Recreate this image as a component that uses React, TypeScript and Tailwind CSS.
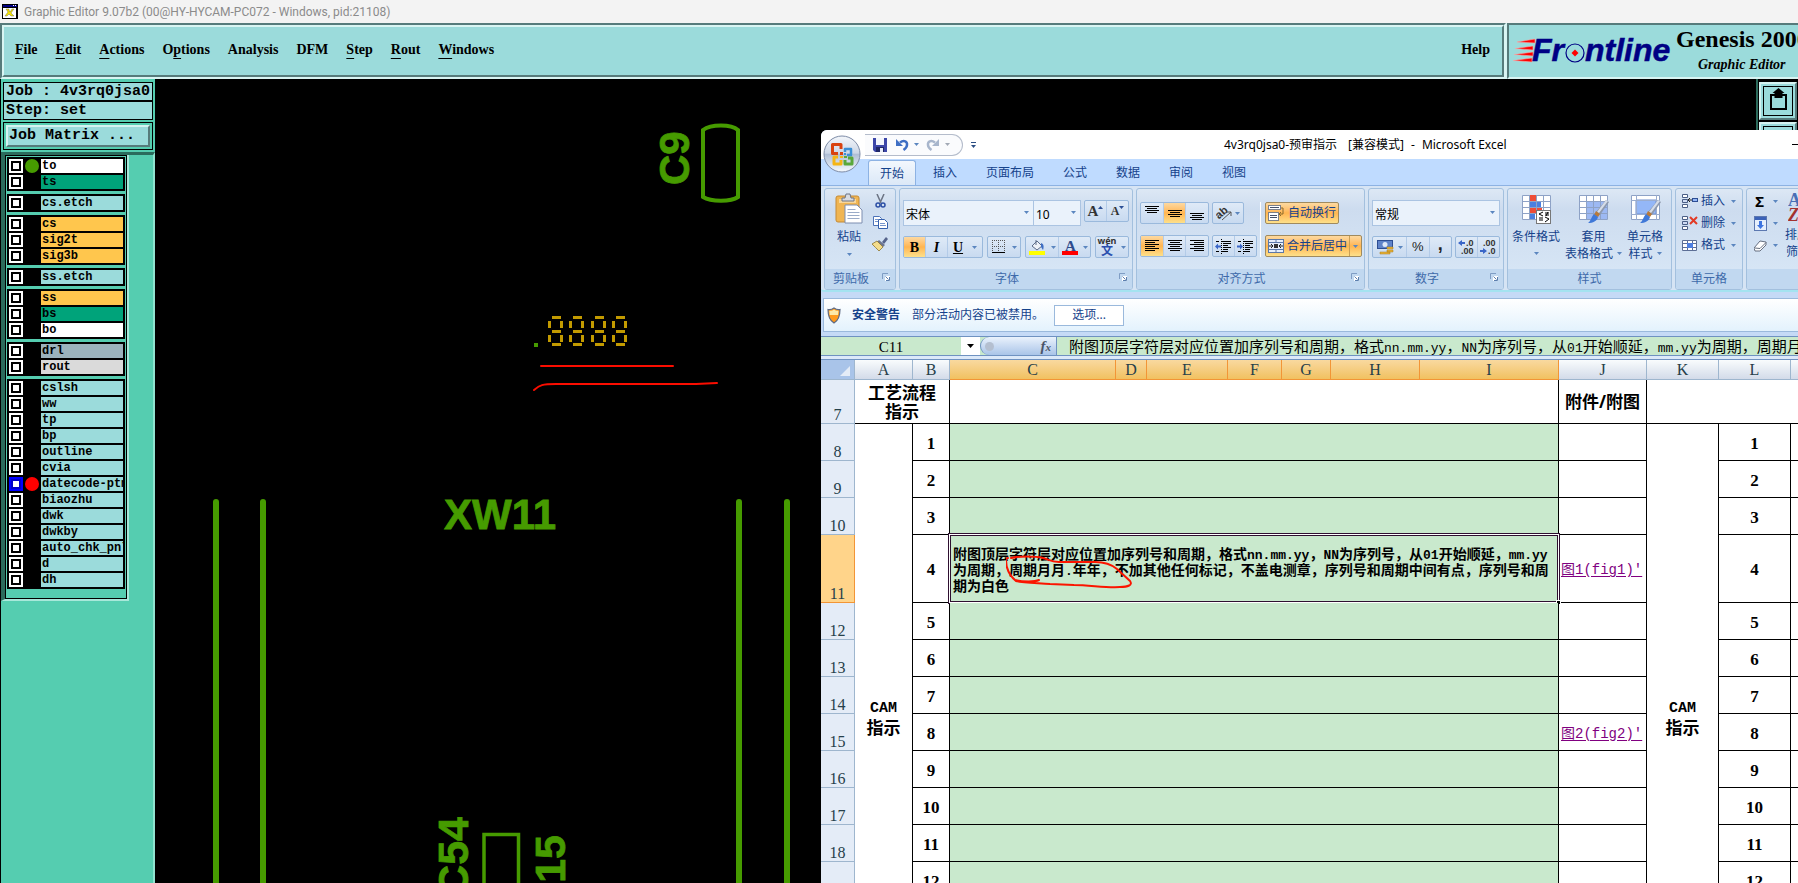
import type { ReactNode } from "react";

const CJK = "font-['Noto_Sans','Noto_Sans_CJK_SC',sans-serif]";

/* ---------- small helpers ---------- */

function Caret({ className = "text-[#5b86bf]" }: { className?: string }) {
  return (
    <svg width="5" height="3" viewBox="0 0 5 3" className={`shrink-0 ${className}`} aria-hidden="true">
      <path d="M0 0h5L2.5 3z" fill="currentColor" />
    </svg>
  );
}

/* Half-width Latin runs next to full-width Chinese characters */
function Mixed({ text, latin }: { text: string; latin: string }) {
  return (
    <>
      {text.split(/([\x21-\x7e]+)/).map((part, i) =>
        i % 2 ? (
          <span key={i} className={latin}>
            {part}
          </span>
        ) : (
          part
        ),
      )}
    </>
  );
}

/* ---------- Genesis editor ---------- */

const menus: { label: string; key: number }[] = [
  { label: "File", key: 0 },
  { label: "Edit", key: 0 },
  { label: "Actions", key: 0 },
  { label: "Options", key: 1 },
  { label: "Analysis", key: -1 },
  { label: "DFM", key: -1 },
  { label: "Step", key: 0 },
  { label: "Rout", key: 0 },
  { label: "Windows", key: 0 },
];

function TitleBar() {
  return (
    <div className="flex h-[23px] shrink-0 items-center gap-[6px] bg-[#f3f3f3] pl-[2px]">
      <svg width="16" height="15" viewBox="0 0 16 15" aria-hidden="true">
        <rect width="16" height="15" fill="#000" />
        <rect x="1" y="1" width="14" height="2" fill="#000080" />
        <rect x="11" y="1" width="1" height="1" fill="#fff" />
        <rect x="13" y="1" width="1" height="1" fill="#fff" />
        <rect x="1" y="4" width="13" height="10" fill="#fff" />
        <path d="M4 5h3v1l1 2 2-3h2l-3 4 3 3h-3l-2-2-2 2H3l3-4z" fill="#f5e400" stroke="#555" strokeWidth=".4" />
      </svg>
      <span className="font-['Roboto',sans-serif] text-[12px] leading-4 text-[#8b8b8b]">
        Graphic Editor 9.07b2 (00@HY-HYCAM-PC072 - Windows, pid:21108)
      </span>
    </div>
  );
}

function GenesisHeader() {
  return (
    <header className="flex h-[56px] shrink-0 gap-[1px] bg-[#d5f3f1] font-['Liberation_Serif',serif] text-black">
      <div className="flex-1 border-2 border-t-[#567b7b] border-r-[#d9f5f3] border-b-[#d9f5f3] border-l-[#567b7b]">
        <nav className="flex h-full items-center gap-[18px] border-2 border-t-[#d9f5f3] border-r-[#567b7b] border-b-[#567b7b] border-l-[#d9f5f3] bg-[#9bdbdb] pr-[12px] pb-[2px] pl-[11px] text-[14px] font-bold">
          {menus.map(({ label, key }) => (
            <button key={label} type="button" className="leading-5">
              {key < 0 ? (
                label
              ) : (
                <>
                  {label.slice(0, key)}
                  <span className="underline underline-offset-4">{label[key]}</span>
                  {label.slice(key + 1)}
                </>
              )}
            </button>
          ))}
          <button type="button" className="ml-auto leading-5">
            Help
          </button>
        </nav>
      </div>
      <div className="flex w-[291px] shrink-0 overflow-hidden border-2 border-t-[#567b7b] border-r-0 border-b-[#d9f5f3] border-l-[#567b7b] bg-[#9bdbdb] pl-[3px]">
        <svg width="162" height="52" viewBox="1512 25 162 52" className="shrink-0" role="img" aria-label="Frontline">
          <g fill="#f00" stroke="#f6a9a9" strokeWidth=".6">
            <path d="M1517 42l18-3v4z" />
            <path d="M1515 48.500l18-2.500v4z" />
            <path d="M1514 54.500l19-2.500v4z" />
            <path d="M1513 60.500l19-2.500v4z" />
          </g>
          <g
            fill="#000084"
            stroke="#000084"
            strokeWidth=".5"
            fontFamily="'Liberation Sans', sans-serif"
            fontWeight="bold"
            fontStyle="italic"
            fontSize="32"
          >
            <text x="1532" y="61">
              Fr
            </text>
            <text x="1585" y="61">
              ntline
            </text>
          </g>
          <circle cx="1575" cy="53" r="9" fill="#9bdbdb" stroke="#000084" strokeWidth="1.200" />
          <path d="M1575 49.500l3.500 3.500-3.500 3.500-3.500-3.500z" fill="#f00" />
        </svg>
        <div className="flex flex-col whitespace-nowrap">
          <h1 className="pl-[2px] text-[24px] leading-[29px] font-bold">Genesis 2000</h1>
          <p className="pl-[24px] text-[14px] leading-[22px] font-bold italic">Graphic Editor</p>
        </div>
      </div>
    </header>
  );
}

type Layer = { name: string; tone: string; dot?: string; active?: boolean };
const teal = "bg-[#9bdbdb]";
const amber = "bg-[#ffc64d]";
const green = "bg-[#00a37a]";
const layerGroups: Layer[][] = [
  [
    { name: "to", tone: "bg-white", dot: "bg-[#469b00]" },
    { name: "ts", tone: green },
  ],
  [{ name: "cs.etch", tone: teal }],
  [
    { name: "cs", tone: amber },
    { name: "sig2t", tone: amber },
    { name: "sig3b", tone: amber },
  ],
  [{ name: "ss.etch", tone: teal }],
  [
    { name: "ss", tone: amber },
    { name: "bs", tone: green },
    { name: "bo", tone: "bg-white" },
  ],
  [
    { name: "drl", tone: "bg-[#9bb3bd]" },
    { name: "rout", tone: "bg-[#dadada]" },
  ],
  [
    { name: "cslsh", tone: teal },
    { name: "ww", tone: teal },
    { name: "tp", tone: teal },
    { name: "bp", tone: teal },
    { name: "outline", tone: teal },
    { name: "cvia", tone: teal },
    { name: "datecode-ptm", tone: teal, dot: "bg-[#ff0000]", active: true },
    { name: "biaozhu", tone: teal },
    { name: "dwk", tone: teal },
    { name: "dwkby", tone: teal },
    { name: "auto_chk_pnl", tone: teal },
    { name: "d", tone: teal },
    { name: "dh", tone: teal },
  ],
];

function LayerPanel() {
  return (
    <aside className="flex w-[155px] shrink-0 flex-col border-l border-black bg-[#55cdb0] pt-[3px] font-['Liberation_Mono',monospace] font-bold text-black">
      <div className="mx-[2px] flex flex-col text-[15px] leading-[17px]">
        <p className="border border-black bg-[#9bdbdb] pl-[2px]">Job : 4v3rq0jsa0</p>
        <p className="border border-black bg-[#9bdbdb] pl-[2px] whitespace-pre">Step: set</p>
        <div className="mt-[2px] border border-black p-[2px]">
          <button
            type="button"
            className="block w-full border-2 border-t-[#d5f3f1] border-r-[#567b7b] border-b-[#567b7b] border-l-[#d5f3f1] bg-[#9bdbdb] pl-[1px] text-left leading-[18px]"
          >
            Job Matrix ...
          </button>
        </div>
      </div>
      <div className="mt-[2px] flex-1 border-t-[3px] border-r-2 border-t-[#2b6b5c] border-r-[#8fe3cf]">
        <div className="w-[128px] border-r-2 border-b-2 border-l-4 border-r-[#a8e8da] border-b-[#a8e8da] border-l-[#2b6b5c]">
          <div className="flex flex-col gap-[3px] border border-black px-[1px] pt-[1px] pb-[9px]">
            {layerGroups.map((group, g) => (
              <ul key={g} className="flex flex-col gap-[2px] bg-black p-[2px]">
                {group.map((l) => (
                  <li key={l.name} className="flex h-[14px] gap-[2px]">
                    <button
                      type="button"
                      aria-label={`Select ${l.name}`}
                      className={`flex size-[14px] shrink-0 items-center justify-center ${l.active ? "bg-[#0000ff]" : "bg-white"}`}
                    >
                      <span
                        className={`size-[10px] border-2 bg-white ${l.active ? "border-[#0000c8]" : "border-black"}`}
                      />
                    </button>
                    <span className={`size-[14px] shrink-0 rounded-full ${l.dot ?? "bg-black"}`} />
                    <span
                      className={`flex-1 overflow-hidden pl-[1px] text-[12px] leading-[14px] whitespace-nowrap ${l.tone}`}
                    >
                      {l.name}
                    </span>
                  </li>
                ))}
              </ul>
            ))}
          </div>
        </div>
      </div>
    </aside>
  );
}

function Segments({ x }: { x: number }) {
  return (
    <path
      d={`M${x + 4} 317.500h9M${x + 4} 331.500h9M${x + 4} 344.500h9M${x + 1.5} 321v7M${x + 13.5} 321v7M${x + 1.5} 335v7M${x + 13.5} 335v7`}
      stroke="#c29a00"
      strokeWidth="3"
    />
  );
}

function BoardCanvas() {
  return (
    <svg width="1600" height="804" viewBox="155 79 1600 804" className="block" role="img" aria-label="Board view">
      <g fill="none" stroke="#469b00" strokeWidth="4">
        <path d="M703 130c8-6 28-6 35 0v67c-7 5-27 5-35 0z" />
        <path d="M484 890V834.500h34.500V890" strokeWidth="3.500" />
      </g>
      <g stroke="#469b00" strokeWidth="6" strokeLinecap="round">
        <path d="M216 502v400M263 502v400M739 502v400M787 502v400" />
      </g>
      <g
        fill="#469b00"
        stroke="#469b00"
        strokeWidth=".8"
        fontFamily="'Liberation Sans', sans-serif"
        fontWeight="bold"
        fontSize="43"
      >
        <text x="444" y="529" fontSize="42">
          XW11
        </text>
        <text transform="translate(689 185) rotate(-90)" fontSize="42">
          C9
        </text>
        <text transform="translate(468 817) rotate(-90)" textAnchor="end">
          C54
        </text>
        <text transform="translate(565 835) rotate(-90)" textAnchor="end">
          C15
        </text>
      </g>
      <rect x="534" y="343" width="4" height="4" fill="#469b00" />
      <Segments x={548} />
      <Segments x={569} />
      <Segments x={591} />
      <Segments x={612} />
      <g fill="none" stroke="#fb0d00" strokeWidth="2" strokeLinecap="round">
        <path d="M541 366h132" />
        <path d="M534 390c6-5 8-6 22-6h140l21-1" />
      </g>
    </svg>
  );
}

function ToolColumn() {
  return (
    <div className="flex w-[42px] shrink-0 flex-col gap-[2px] border-l-2 border-[#2b6b5c] bg-black pt-[3px] pl-[1px]">
      {[0, 1].map((i) => (
        <button
          key={i}
          type="button"
          aria-label={i ? "Zoom" : "Export"}
          className="flex size-[38px] items-center justify-center border-2 border-t-[#d5f3f1] border-r-[#567b7b] border-b-[#567b7b] border-l-[#d5f3f1] bg-[#9bdbdb]"
        >
          <svg width="30" height="30" viewBox="0 0 30 30" aria-hidden="true">
            <rect x=".5" y=".5" width="29" height="29" fill="none" stroke="#000" />
            {i === 0 && (
              <>
                <path d="M12 9H8v14h15V9h-4" fill="none" stroke="#000" strokeWidth="2" />
                <path d="M15.500 2l6 5h-2v5h-8V7h-2z" />
              </>
            )}
          </svg>
        </button>
      ))}
    </div>
  );
}

/* ---------- Excel window ---------- */

function OfficeOrb() {
  return (
    <svg width="38" height="38" viewBox="0 0 38 38" aria-hidden="true">
      <defs>
        <linearGradient id="orb" x1="0" y1="0" x2="0" y2="1">
          <stop offset="0" stopColor="#f4f7fb" />
          <stop offset=".48" stopColor="#ccd6e6" />
          <stop offset=".5" stopColor="#aebdd4" />
          <stop offset="1" stopColor="#f6fafe" />
        </linearGradient>
      </defs>
      <circle cx="19" cy="19" r="18" fill="url(#orb)" stroke="#7d8ba6" />
      <g fill="none" strokeWidth="3" strokeLinejoin="round">
        <path d="M18 14V9.500H9.500v9H15" stroke="#d9420f" />
        <path d="M22 17v-3h6v6h-4" stroke="#3b8fd6" strokeWidth="2.500" />
        <path d="M18 25v4h-7v-7h4" stroke="#f5b515" />
        <path d="M22 25v4h7v-6h-4" stroke="#5aa83a" />
      </g>
      <g>
        <rect x="17" y="17" width="3" height="3" fill="#d9420f" />
        <rect x="21" y="18" width="2" height="2" fill="#3b8fd6" />
        <rect x="17" y="21" width="3" height="2" fill="#f5b515" />
        <rect x="21" y="21" width="3" height="2" fill="#5aa83a" />
      </g>
    </svg>
  );
}

function SaveIcon() {
  return (
    <svg width="14" height="14" viewBox="0 0 14 14" aria-hidden="true">
      <path d="M0 0h14v14H2l-2-2z" fill="#3c46a8" />
      <rect x="3" y="0" width="8" height="7" fill="#f2f5fc" />
      <rect x="3" y="9" width="8" height="5" fill="#1f2766" />
      <rect x="7" y="10" width="3" height="4" fill="#e8ecf8" />
    </svg>
  );
}

function UndoIcon({ tone, flip }: { tone: string; flip?: boolean }) {
  return (
    <svg width="13" height="13" viewBox="0 0 13 13" aria-hidden="true">
      <g transform={flip ? "translate(13 0) scale(-1 1)" : undefined}>
        <path d="M4 4.500c4-3 7.500-1 7 2.500 0 2-1.500 3.500-3.500 5" fill="none" stroke={tone} strokeWidth="2.500" />
        <path d="M0 1v7h7z" fill={tone} />
      </g>
    </svg>
  );
}

const tabs = ["开始", "插入", "页面布局", "公式", "数据", "审阅", "视图"];

function ExcelTitle() {
  return (
    <div className="relative flex h-[29px] shrink-0 items-center bg-white">
      <div className="ml-[44px] flex h-[22px] w-[98px] items-center rounded-r-full border border-l-0 border-[#b4bccb] bg-[#fafbfd] pl-[8px]">
        <button type="button" aria-label="保存">
          <SaveIcon />
        </button>
        <button type="button" aria-label="撤销" className="ml-[9px] flex items-center gap-[5px]">
          <UndoIcon tone="#3f6fc4" />
          <Caret />
        </button>
        <button type="button" aria-label="恢复" className="ml-[7px] flex items-center gap-[6px]">
          <UndoIcon tone="#a8b6cc" flip />
          <Caret className="text-[#a2a9b5]" />
        </button>
      </div>
      <button type="button" aria-label="自定义快速访问工具栏" className="ml-[8px] flex flex-col gap-[2px]">
        <span className="h-px w-[5px] bg-[#2a4d83]" />
        <Caret className="text-[#2a4d83]" />
      </button>
      <h2 className={`ml-[248px] flex gap-[7px] text-[12px] leading-4 whitespace-nowrap text-black ${CJK}`}>
        <span>4v3rq0jsa0-预审指示</span>
        <span className="pl-[4px]">[兼容模式]</span>
        <span>-</span>
        <span>Microsoft Excel</span>
      </h2>
      <span className="absolute top-[14px] right-0 h-px w-[6px] bg-black" />
    </div>
  );
}

function ExcelTabs() {
  return (
    <div role="tablist" className="flex h-[27px] shrink-0 items-end gap-[5px] border-b border-[#8db2e3] bg-[#bfdbff] pl-[47px]">
      {tabs.map((t, i) => (
        <button
          key={t}
          role="tab"
          type="button"
          aria-selected={i === 0}
          className={`h-[25px] rounded-t-[3px] px-[11px] text-[12px] leading-[23px] text-[#15428b] ${
            i === 0
              ? "border border-b-0 border-[#8db2e3] bg-linear-to-b from-[#f2f7fd] to-[#dbe8f7]"
              : "border border-transparent"
          }`}
        >
          {t}
        </button>
      ))}
    </div>
  );
}

function Group({
  title,
  className,
  launcher,
  children,
}: {
  title: string;
  className: string;
  launcher?: boolean;
  children: ReactNode;
}) {
  return (
    <section
      className={`flex h-[102px] shrink-0 flex-col overflow-hidden rounded-[3px] border border-[#a3c0de] bg-linear-to-b from-[#dde8f5] from-0% via-[#cddcef] via-20% to-[#d9e8f7] ${className}`}
    >
      <div className="min-h-0 flex-1">{children}</div>
      <div
        className={`relative h-[20px] bg-[#c1d8f0] text-center text-[12px] leading-[19px] whitespace-nowrap text-[#3e6aaa] ${
          launcher ? "pr-[18px]" : ""
        }`}
      >
        {title}
        {launcher && (
          <button type="button" aria-label={`${title}设置`} className="absolute top-[4px] right-[5px]">
            <svg width="8" height="8" viewBox="0 0 8 8" aria-hidden="true">
              <path d="M.5 6V.5H6" fill="none" stroke="#7f9dc4" />
              <path d="M3 3h5v5H3z" fill="#fff" />
              <path d="M3.500 3.500l3 3M7.500 4v3.500H4" fill="none" stroke="#5d7fae" />
            </svg>
          </button>
        )}
      </div>
    </section>
  );
}

function Cluster({ className = "", children }: { className?: string; children: ReactNode }) {
  return (
    <div
      className={`flex h-[22px] shrink-0 divide-x divide-[#b3cbe8] overflow-hidden rounded-[2px] border border-[#9ab9dc] bg-linear-to-b from-[#dfeaf7] to-[#c8daf0] ${className}`}
    >
      {children}
    </div>
  );
}

const hot = "bg-linear-to-b from-[#fdd9a0] via-[#ffb550] to-[#fde08a]";

function Tool({ label, on, className = "flex-1", children }: { label: string; on?: boolean; className?: string; children: ReactNode }) {
  return (
    <button type="button" aria-label={label} className={`flex items-center justify-center ${on ? hot : ""} ${className}`}>
      {children}
    </button>
  );
}

function Lines({ kind, y }: { kind: "left" | "center" | "right"; y: number[] }) {
  return (
    <svg width="16" height="16" viewBox="0 0 16 16" aria-hidden="true">
      {y.map((v, i) => {
        const w = i % 2 ? 10 : 14;
        const x = kind === "left" ? 1 : kind === "right" ? 15 - w : 8 - w / 2;
        return <rect key={v} x={x} y={v} width={w} height="1" fill="#000" />;
      })}
    </svg>
  );
}

function IndentIcon({ out }: { out?: boolean }) {
  return (
    <svg width="17" height="15" viewBox="0 0 17 15" aria-hidden="true">
      <path
        d="M1 2.500h3M6 2.500h10M8 4.500h8M8 6.500h5M8 8.500h8M8 10.500h5M1 12.500h3M6 12.500h7"
        stroke="#000"
        fill="none"
      />
      <path d="M6.500 0v15" stroke="#000" strokeDasharray="1 1" />
      <path d={out ? "M0 7.500l3-3v2h3v2H3v2z" : "M6 7.500l-3-3v2H0v2h3v2z"} fill="#3a66c8" />
    </svg>
  );
}

function ClipboardGroup() {
  return (
    <Group title="剪贴板" className="w-[72px]" launcher>
      <div className="flex pt-[4px] pl-[10px]">
        <button type="button" className="flex flex-col items-center text-[12px] text-[#15428b]">
          <svg width="28" height="31" viewBox="0 0 28 31" aria-hidden="true">
            <rect x="1" y="3" width="23" height="26" rx="2" fill="#f0b552" stroke="#c58a35" />
            <rect x="4" y="6" width="17" height="4" fill="#f8d79a" />
            <path d="M7 5h3l1-4h4l1 4h3v3H7z" fill="#d8dbe2" stroke="#6c7486" />
            <path d="M10 12h12l5 5v13H10z" fill="#fff" stroke="#7d8db0" />
            <path d="M12.500 16.500h8M12.500 19.500h12M12.500 22.500h12M12.500 25.500h12" stroke="#9aabc8" />
          </svg>
          <span className="mt-[5px] leading-4">粘贴</span>
          <Caret className="mt-[8px] text-[#5b86bf]" />
        </button>
        <div className="ml-[9px] flex flex-col items-center gap-[8px] pt-[1px]">
          <button type="button" aria-label="剪切">
            <svg width="11" height="14" viewBox="0 0 11 14" aria-hidden="true">
              <path d="M2 0l4 9M9 0L5 9" stroke="#6c7484" strokeWidth="1.500" />
              <circle cx="3" cy="11" r="2" fill="none" stroke="#2c4fa5" strokeWidth="1.500" />
              <circle cx="8" cy="11" r="2" fill="none" stroke="#2c4fa5" strokeWidth="1.500" />
            </svg>
          </button>
          <button type="button" aria-label="复制">
            <svg width="15" height="13" viewBox="0 0 15 13" aria-hidden="true">
              <path d="M.5.500h6l2 2v7h-8z" fill="#fff" stroke="#4c72b8" />
              <path d="M5.500 3.500h6l3 3v6h-9z" fill="#fff" stroke="#3560ad" />
              <path d="M2 3.500h3M2 5.500h3M7 7.500h5M7 9.500h6" stroke="#7695cc" />
            </svg>
          </button>
          <button type="button" aria-label="格式刷">
            <svg width="16" height="14" viewBox="0 0 16 14" aria-hidden="true">
              <path d="M10 5l4-5 2 2-4 5z" fill="#56648c" />
              <path d="M7 3l6 5-2 2-6-5z" fill="#6d7690" />
              <path d="M5 4l6 6-4 4C5 12 2 9 0 7z" fill="#f3dc8c" stroke="#8c7430" strokeWidth=".8" />
            </svg>
          </button>
        </div>
      </div>
    </Group>
  );
}

function Combo({ label, value, className }: { label: string; value: string; className: string }) {
  return (
    <div className={`relative h-[26px] border border-[#abc4e2] bg-[#eaf2fb] ${className}`}>
      <select
        aria-label={label}
        defaultValue={value}
        className="h-[22px] w-full appearance-none bg-transparent pl-[2px] text-[12px] text-black outline-none"
      >
        <option>{value}</option>
      </select>
      <span className="pointer-events-none absolute top-[10px] right-[4px] flex">
        <Caret />
      </span>
    </div>
  );
}

function FontGroup() {
  return (
    <Group title="字体" className="w-[234px]" launcher>
      <div className="flex flex-col gap-[10px] px-[3px] pt-[11px] font-['Liberation_Serif',serif] font-bold text-[#333]">
        <div className="flex items-start gap-[3px]">
          <div className={`flex font-normal ${CJK}`}>
            <Combo label="字体" value="宋体" className="w-[131px]" />
            <Combo label="字号" value="10" className="-ml-px w-[48px]" />
          </div>
          <Cluster className="w-[45px]">
            <Tool label="增大字号">
              <span className="text-[15px] leading-none">A</span>
              <svg width="5" height="12" viewBox="0 0 5 12" aria-hidden="true">
                <path d="M0 4h5L2.500 1z" fill="#2c4f96" />
              </svg>
            </Tool>
            <Tool label="减小字号">
              <span className="text-[12px] leading-none">A</span>
              <svg width="5" height="12" viewBox="0 0 5 12" aria-hidden="true">
                <path d="M0 1h5L2.500 4z" fill="#2c4f96" />
              </svg>
            </Tool>
          </Cluster>
        </div>
        <div className="flex gap-[4px]">
          <Cluster className="w-[80px] text-[14px] text-black">
            <Tool label="加粗" on className="w-[22px]">
              B
            </Tool>
            <Tool label="倾斜" className="w-[22px]">
              <i>I</i>
            </Tool>
            <Tool label="下划线" className="flex-1 gap-[9px]">
              <span className="underline">U</span>
              <Caret />
            </Tool>
          </Cluster>
          <Cluster className="w-[34px]">
            <Tool label="边框" className="flex-1 gap-[6px]">
              <svg width="14" height="14" viewBox="0 0 14 14" aria-hidden="true">
                <path d="M.5 0v12M6.500 0v12M12.500 0v12M0 .5h13M0 6.500h13" stroke="#555" strokeDasharray="1 1" />
                <rect y="12" width="13" height="1" fill="#000" />
              </svg>
              <Caret />
            </Tool>
          </Cluster>
          <Cluster className="w-[66px]">
            <Tool label="填充颜色" className="w-[33px] gap-[5px]">
              <svg width="17" height="17" viewBox="0 0 17 17" aria-hidden="true">
                <path d="M3 7l5-5 5 5-5 4z" fill="#eef2f8" stroke="#5d6c88" />
                <path d="M7 1v5" stroke="#5d6c88" />
                <path d="M12 4c3 1 3 4 2 7l-2-3z" fill="#3f6fc4" />
                <rect y="12" width="16" height="4" fill="#ff0" />
              </svg>
              <Caret />
            </Tool>
            <Tool label="字体颜色" className="flex-1 gap-[5px]">
              <svg width="16" height="17" viewBox="0 0 16 17" aria-hidden="true">
                <text x="3" y="12" fontSize="15" fill="#2d4b8c" fontFamily="'Liberation Serif', serif" fontWeight="bold">
                  A
                </text>
                <rect y="12" width="16" height="4" fill="#f00" />
              </svg>
              <Caret />
            </Tool>
          </Cluster>
          <Cluster className="w-[34px]">
            <Tool label="显示拼音" className={`flex-1 gap-[5px] ${CJK}`}>
              <span className="flex flex-col items-center">
                <span className="text-[9px] leading-[8px]">wén</span>
                <span className="text-[12px] leading-[12px] text-[#2b4fae]">文</span>
              </span>
              <Caret />
            </Tool>
          </Cluster>
        </div>
      </div>
    </Group>
  );
}

function AlignGroup() {
  return (
    <Group title="对齐方式" className="w-[229px]" launcher>
      <div className="flex gap-[3px] pt-[13px] pl-[3px]">
        <div className="flex flex-col gap-[11px]">
          <div className="flex gap-[3px]">
            <Cluster className="w-[69px]">
              <Tool label="顶端对齐">
                <Lines kind="center" y={[1, 3, 5, 7]} />
              </Tool>
              <Tool label="垂直居中" on>
                <Lines kind="center" y={[5, 7, 9, 11]} />
              </Tool>
              <Tool label="底端对齐">
                <Lines kind="center" y={[8, 10, 12, 14]} />
              </Tool>
            </Cluster>
            <Cluster className="w-[32px]">
              <Tool label="方向" className="flex-1 gap-[3px]">
                <svg width="16" height="16" viewBox="0 0 16 16" aria-hidden="true">
                  <text x="0" y="11" transform="rotate(-40 6 9)" fontSize="11" fontWeight="bold" fill="#333" fontFamily="'Liberation Sans', sans-serif">
                    ab
                  </text>
                  <path d="M6 15l9-8M15 7v4M15 7h-4" stroke="#555" fill="none" />
                </svg>
                <Caret />
              </Tool>
            </Cluster>
          </div>
          <div className="flex gap-[3px]">
            <Cluster className="w-[69px]">
              <Tool label="左对齐" on>
                <Lines kind="left" y={[2, 4, 6, 8, 10, 12]} />
              </Tool>
              <Tool label="居中">
                <Lines kind="center" y={[2, 4, 6, 8, 10, 12]} />
              </Tool>
              <Tool label="右对齐">
                <Lines kind="right" y={[2, 4, 6, 8, 10, 12]} />
              </Tool>
            </Cluster>
            <Cluster className="w-[45px]">
              <Tool label="减少缩进">
                <IndentIcon out />
              </Tool>
              <Tool label="增加缩进">
                <IndentIcon />
              </Tool>
            </Cluster>
          </div>
        </div>
        <div className="flex flex-col items-start gap-[11px] border-l border-white pl-[4px] text-[12px] whitespace-nowrap text-[#15428b]">
          <button type="button" className={`flex h-[22px] items-center gap-[3px] rounded-[2px] border border-[#a08a5e] px-[2px] ${hot}`}>
            <svg width="17" height="16" viewBox="0 0 17 16" aria-hidden="true">
              <rect x=".5" y=".5" width="12" height="4" fill="#fff" stroke="#7b7f8a" />
              <rect x=".5" y="7.500" width="10" height="8" fill="#fff" stroke="#7b7f8a" />
              <path d="M2 10.500h7M2 12.500h7M2 2.500h9" stroke="#46506a" />
              <path d="M13 3h2v6h-3M13 7l-2 2 2 2" fill="none" stroke="#8a6a2c" />
            </svg>
            自动换行
          </button>
          <div className={`flex h-[22px] items-stretch rounded-[2px] border border-[#a08a5e] ${hot}`}>
            <button type="button" className="flex items-center gap-[3px] px-[2px]">
              <svg width="16" height="14" viewBox="0 0 16 14" aria-hidden="true">
                <rect x=".5" y=".5" width="15" height="13" fill="#e6eefa" stroke="#5c78a8" />
                <path d="M0 3.500h16M0 10.500h16M8 0v3M8 11v3" stroke="#5c78a8" />
                <path d="M1 7h4M15 7h-4M3 5l2 2-2 2M13 5l-2 2 2 2" stroke="#222" fill="none" />
                <rect x="6" y="5" width="4" height="4" fill="#333" />
              </svg>
              合并后居中
            </button>
            <button type="button" aria-label="合并选项" className="flex w-[12px] items-center justify-center border-l border-[#c99f55]">
              <Caret />
            </button>
          </div>
        </div>
      </div>
    </Group>
  );
}

function NumberGroup() {
  return (
    <Group title="数字" className="w-[136px]" launcher>
      <div className="flex flex-col gap-[10px] px-[3px] pt-[11px]">
        <Combo label="数字格式" value="常规" className="w-full" />
        <div className="flex gap-[3px] font-['Liberation_Sans',sans-serif] text-[13px] text-[#222]">
          <Cluster className="w-[80px]">
            <Tool label="会计数字格式" className="w-[34px] gap-[4px]">
              <svg width="17" height="16" viewBox="0 0 17 16" aria-hidden="true">
                <rect x=".5" y="1.500" width="15" height="8" fill="#5f83c9" stroke="#2d4d92" />
                <circle cx="8" cy="5.500" r="2.500" fill="#dfe8f8" />
                <path d="M10 8h6v2h-6zM10 11h6v2h-6zM3 13h10v2H3z" fill="#e9b43a" stroke="#a87b17" strokeWidth=".5" />
              </svg>
              <Caret />
            </Tool>
            <Tool label="百分比样式">%</Tool>
            <Tool label="千位分隔样式">
              <span className="-mt-[6px] text-[18px] leading-none font-bold">,</span>
            </Tool>
          </Cluster>
          <Cluster className="flex-1">
            <Tool label="增加小数位数">
              <svg width="17" height="16" viewBox="0 0 17 16" fontFamily="'Liberation Sans', sans-serif" fontWeight="bold" fontSize="9" fill="#333" aria-hidden="true">
                <path d="M0 4l4-3v2h3v2H4v2z" fill="#3a66c8" />
                <text x="8" y="7">.0</text>
                <text x="3" y="15">.00</text>
              </svg>
            </Tool>
            <Tool label="减少小数位数">
              <svg width="17" height="16" viewBox="0 0 17 16" fontFamily="'Liberation Sans', sans-serif" fontWeight="bold" fontSize="9" fill="#333" aria-hidden="true">
                <text x="3" y="7">.00</text>
                <path d="M7 12L3 9v2H0v2h3v2z" fill="#3a66c8" />
                <text x="8" y="15">.0</text>
              </svg>
            </Tool>
          </Cluster>
        </div>
      </div>
    </Group>
  );
}

function GridIcon({ kind }: { kind: "cond" | "table" | "cell" }) {
  return (
    <svg width="31" height="30" viewBox="0 0 31 30" aria-hidden="true">
      <path d="M1.500 1.500h28v24h-28z" fill="#fff" stroke="#8ea2c6" />
      {kind === "cond" && (
        <>
          <path d="M8 1h7v6H8zM8 13h13v6H8z" fill="#ee4d37" />
          <path d="M8 7h12v6H8zM8 19h6v6H8z" fill="#4a7fe0" />
        </>
      )}
      {kind === "table" && <path d="M8 7h21v18H8z" fill="#9db9f3" />}
      {kind === "cell" && <path d="M6 6h20v14H6z" fill="#94b7f7" stroke="#6f8fce" />}
      {kind === "cell" ? (
        <path d="M6.500 1v25M1 6.500h29M1 20.500h29M26.500 1v25" stroke="#9aacce" />
      ) : (
        <path d="M8.500 1v25M15.500 1v25M22.500 1v25M1 7.500h29M1 13.500h29M1 19.500h29" stroke="#8ea2c6" />
      )}
      {kind === "cond" ? (
        <>
          <rect x="15.500" y="16.500" width="14" height="13" fill="#fff" stroke="#777" />
          <path d="M22 18l-4 2 4 2M18 24h4M18 26h4M24 19h4M24 21h4M27 18l-2 4M24 23l4 2-4 3" stroke="#000" fill="none" />
        </>
      ) : (
        <>
          <path d="M28 6l3 2-9 13-4-3z" fill="#8d99ae" />
          <path d="M28 6l2 1-9 12-2-1z" fill="#d5dce8" />
          <path d="M18 17l4 3-2 3-4-2z" fill="#b97a3a" />
          <path d="M16 20l4 3c-1 4-5 6-10 6 3-2 3-6 6-9z" fill="#3f78d8" />
        </>
      )}
    </svg>
  );
}

function StyleGroup() {
  const item = "flex flex-col items-center text-[12px] leading-[17px] whitespace-nowrap text-[#15428b]";
  return (
    <Group title="样式" className="w-[165px]">
      <div className="flex gap-[5px] pt-[5px] pl-[4px]">
        <button type="button" className={item}>
          <GridIcon kind="cond" />
          <span className="mt-[4px]">条件格式</span>
          <span className="flex h-[17px] items-center">
            <Caret />
          </span>
        </button>
        <button type="button" className={item}>
          <GridIcon kind="table" />
          <span className="mt-[4px]">套用</span>
          <span className="flex items-center gap-[4px]">
            表格格式
            <Caret />
          </span>
        </button>
        <button type="button" className={item}>
          <GridIcon kind="cell" />
          <span className="mt-[4px]">单元格</span>
          <span className="flex items-center gap-[4px]">
            样式
            <Caret />
          </span>
        </button>
      </div>
    </Group>
  );
}

function CellsIcon({ kind }: { kind: number }) {
  return (
    <svg width="16" height="15" viewBox="0 0 16 15" aria-hidden="true">
      {kind < 2 ? (
        <>
          <path d="M.5.500h5v3h-5zM.5 10.500h5v3h-5z" fill="#fff" stroke="#4b5f86" />
          <path d="M.5 5.500h5v3h-5z" fill="#cfdcf5" stroke="#4b5f86" />
        </>
      ) : (
        <>
          <path d="M.5 2.500h14v10H.500zM.5 5.500h14M.5 9.500h14M5.500 2v10M10.500 2v10" fill="#fff" stroke="#5d6f96" />
          <rect x="5" y="5" width="6" height="5" fill="#4f7fe0" />
        </>
      )}
      {kind === 0 && (
        <>
          <path d="M7 6h3M8 4L6 6l2 2" stroke="#222" fill="none" />
          <rect x="10.500" y="4.500" width="5" height="3" fill="#94b7f7" stroke="#2d4d92" />
        </>
      )}
      {kind === 1 && <path d="M8 1l7 7M15 1L8 8" stroke="#e23a26" strokeWidth="2" />}
    </svg>
  );
}

function CellsGroup() {
  return (
    <Group title="单元格" className="w-[68px]">
      <div className="flex flex-col gap-[4px] pt-[3px] pl-[6px] text-[12px] text-[#15428b]">
        {["插入", "删除", "格式"].map((t, i) => (
          <button key={t} type="button" className="flex h-[18px] items-center gap-[3px] whitespace-nowrap">
            <CellsIcon kind={i} />
            {t}
            <span className="ml-[3px]">
              <Caret />
            </span>
          </button>
        ))}
      </div>
    </Group>
  );
}

function EditGroup() {
  return (
    <Group title="编辑" className="w-[140px]">
      <div className="flex pt-[3px] pl-[7px] text-[12px] text-[#15428b]">
        <div className="flex flex-col gap-[4px]">
          <button type="button" aria-label="求和" className="flex h-[18px] items-center gap-[8px]">
            <span className="w-[11px] text-[15px] leading-none font-bold text-black">Σ</span>
            <Caret />
          </button>
          <button type="button" aria-label="填充" className="flex h-[18px] items-center gap-[6px]">
            <svg width="13" height="15" viewBox="0 0 13 15" aria-hidden="true">
              <rect x=".5" y=".5" width="12" height="14" fill="#e6effc" stroke="#5c78b0" />
              <rect x="1" y="1" width="11" height="3" fill="#3b62b8" />
              <path d="M5 5h3v4h2l-3.500 4L3 9h2z" fill="#3d74e0" />
            </svg>
            <Caret />
          </button>
          <button type="button" aria-label="清除" className="flex h-[18px] items-center gap-[6px]">
            <svg width="13" height="13" viewBox="0 0 13 13" aria-hidden="true">
              <path d="M0 9l6-7 6 1v3l-6 6H1z" fill="#fff" stroke="#666f80" />
              <path d="M1 9l5 .500 6-6" fill="none" stroke="#666f80" />
            </svg>
            <Caret />
          </button>
        </div>
        <button type="button" className="ml-[7px] flex flex-col items-start whitespace-nowrap">
          <svg width="30" height="32" viewBox="0 0 30 32" className="ml-[3px]" aria-hidden="true">
            <g fontFamily="'Liberation Serif', serif" fontWeight="bold" fontSize="18">
              <text x="0" y="14" fill="#4a6fb5">
                A
              </text>
              <text x="0" y="29" fill="#a3322f" fontStyle="italic">
                Z
              </text>
            </g>
            <path d="M15 2h14l-5 7v8l-4-2V9z" fill="#e7bf62" stroke="#9c7a2c" />
          </svg>
          <span className="mt-[2px] leading-[17px]">排序和</span>
          <span className="pl-[1px] leading-[17px]">筛选</span>
        </button>
      </div>
    </Group>
  );
}

function SecurityBar() {
  return (
    <div className="mt-[6px] ml-[2px] flex h-[34px] shrink-0 items-center border border-r-0 border-[#9ab9dc] bg-linear-to-b from-white to-[#e3f2fd] pl-[3px] text-[12px] text-[#15428b]">
      <svg width="14" height="17" viewBox="0 0 14 17" aria-hidden="true">
        <path d="M7 1c2 1.500 4 2 6 1.500 0 6-1 10.500-6 13.500C2 13 1 8.500 1 2.500 3 3 5 2.500 7 1z" fill="#ff9a1c" stroke="#5d6a85" strokeWidth="1.200" />
        <path d="M7 2.500c1 1 3 1.500 4.500 1.300L11 8H2.700L2.300 3.800C4 4 6 3.500 7 2.500z" fill="#fde9a8" />
      </svg>
      <strong className="ml-[11px] font-bold">安全警告</strong>
      <span className="ml-[12px]">部分活动内容已被禁用。</span>
      <button type="button" className="ml-[10px] h-[21px] w-[70px] border border-[#9ab9dc] bg-white leading-[18px]">
        选项...
      </button>
    </div>
  );
}

const cellNote = [
  "附图顶层字符层对应位置加序列号和周期，格式nn.mm.yy，NN为序列号，从01开始顺延，mm.yy",
  "为周期，周期月月.年年，不加其他任何标记，不盖电测章，序列号和周期中间有点，序列号和周",
  "期为白色",
];

function FormulaBar() {
  return (
    <div className="mt-[4px] flex h-[20px] shrink-0 items-stretch border-y border-[#6f92c1] bg-[#c9e9cd] text-black">
      <span className="w-[140px] text-center font-['Liberation_Serif',serif] text-[15px] leading-[20px]">C11</span>
      <button type="button" aria-label="名称框列表" className="flex w-[19px] items-center justify-center bg-white">
        <svg width="7" height="4" viewBox="0 0 7 4" aria-hidden="true">
          <path d="M0 0h7L3.500 4z" />
        </svg>
      </button>
      <div className="flex w-[77px] items-center justify-between rounded-l-full border-r border-l border-[#6f92c1] bg-linear-to-b from-[#eaf2fc] to-[#a9c4e8] pr-[5px] pl-[4px]">
        <span className="size-[9px] rounded-full bg-[#b4bfd0]" />
        <span className="font-['Liberation_Serif',serif] text-[15px] leading-none font-bold text-[#4b5568] italic">
          f<span className="text-[11px]">x</span>
        </span>
      </div>
      <p className="flex-1 overflow-hidden pl-[12px] font-['Noto_Sans_CJK_SC',sans-serif] text-[15px] leading-[18px] whitespace-nowrap">
        <Mixed
          text={`${cellNote[0]}为周期，周期月月.年年`}
          latin="font-['Liberation_Mono',monospace] text-[13px] leading-[10px]"
        />
      </p>
    </div>
  );
}

const columns: { name: string; w: string; hot?: boolean }[] = [
  { name: "A", w: "w-[58px]" },
  { name: "B", w: "w-[37px]" },
  { name: "C", w: "w-[166px]", hot: true },
  { name: "D", w: "w-[31px]", hot: true },
  { name: "E", w: "w-[81px]", hot: true },
  { name: "F", w: "w-[54px]", hot: true },
  { name: "G", w: "w-[49px]", hot: true },
  { name: "H", w: "w-[89px]", hot: true },
  { name: "I", w: "w-[139px]", hot: true },
  { name: "J", w: "w-[88px]" },
  { name: "K", w: "w-[72px]" },
  { name: "L", w: "w-[72px]" },
  { name: "M", w: "w-[80px]" },
];

const cell = "border-r border-b border-black";
const numCell = `${cell} p-0 pt-[3px] text-center font-['Liberation_Serif',serif] text-[17px] leading-[20px] font-bold`;
const links: Record<number, string> = { 11: "图1(fig1)'", 15: "图2(fig2)'" };

function RowHead({ n, on }: { n: number; on?: boolean }) {
  return (
    <th
      scope="row"
      className={`border-r border-b p-0 text-center align-bottom font-['Liberation_Serif',serif] text-[16px] leading-[16px] font-normal text-[#26404a] ${
        on ? "border-[#f29536] bg-[#ffd48a]" : "border-[#9eb6ce] bg-[#e4ecf7]"
      }`}
    >
      {n}
    </th>
  );
}

function Side() {
  return (
    <td rowSpan={15} className={`${cell} text-center text-[17px] leading-[19px] font-bold`}>
      <span className="font-['Liberation_Mono',monospace] text-[15px]">CAM</span>
      <br />
      指示
    </td>
  );
}

function Selection() {
  return (
    <>
      <span className="pointer-events-none absolute -top-[2px] -right-[2px] -bottom-[2px] -left-[2px] shadow-[inset_0_0_0_1px_#2e1030,inset_0_0_0_2px_#ffffff,inset_0_0_0_3px_#2e1030]" />
      <span className="pointer-events-none absolute -right-[3px] -bottom-[3px] size-[5px] border border-white bg-black" />
      <svg width="130" height="36" viewBox="0 0 130 36" className="pointer-events-none absolute top-[20px] left-[56px]" aria-hidden="true">
        <path
          d="M5 3c8-2 24-2 32 0 6 2 9 4 16 4h36c10 0 16 2 22 7l13 12c3 4-2 6-10 6-14 1-30-2-46-2l-24-1c-12-1-26-1-34-3-6-5-10-13-10-21 0-1 1-2 2-2M9 25c8 2 20 2 24 0"
          fill="none"
          stroke="#fb1500"
          strokeWidth="2"
          strokeLinecap="round"
        />
      </svg>
    </>
  );
}

function Sheet() {
  const rows = Array.from({ length: 15 }, (_, i) => i + 8);
  return (
    <div className="min-h-0 flex-1 overflow-hidden bg-white">
      <table className="w-[1050px] table-fixed border-separate border-spacing-0 text-black">
        <thead>
          <tr className="h-[20px]">
            <th className="relative w-[34px] border-r border-b border-[#9eb6ce] bg-[#a9c4e9]">
              <svg width="10" height="10" viewBox="0 0 10 10" className="absolute right-[4px] bottom-[3px]" aria-hidden="true">
                <path d="M10 0v10H0z" fill="#e4ecf7" />
              </svg>
            </th>
            {columns.map((c) => (
              <th
                key={c.name}
                scope="col"
                className={`border-r border-b p-0 font-['Liberation_Serif',serif] text-[16px] leading-[19px] font-normal text-[#26404a] ${c.w} ${
                  c.hot
                    ? "border-[#f29536] bg-linear-to-b from-[#f9d99f] to-[#f1c15f]"
                    : "border-[#9eb6ce] bg-linear-to-b from-[#f9fcfd] to-[#d3dbe9]"
                }`}
              >
                {c.name}
              </th>
            ))}
          </tr>
        </thead>
        <tbody>
          <tr className="h-[44px]">
            <RowHead n={7} />
            <td colSpan={2} className={`${cell} p-0 text-center text-[17px] leading-[19px] font-bold`}>
              工艺流程
              <br />
              指示
            </td>
            <td colSpan={7} className={cell} />
            <td className={`${cell} p-0 text-center text-[17px] font-bold whitespace-nowrap`}>附件/附图</td>
            <td colSpan={3} className="border-b border-black" />
          </tr>
          {rows.map((r) => (
            <tr key={r} className={r === 11 ? "h-[68px]" : "h-[37px]"}>
              <RowHead n={r} on={r === 11} />
              {r === 8 && <Side />}
              <td className={numCell}>{r - 7}</td>
              <td colSpan={7} className={`relative ${cell} bg-[#c9e9cd] p-0`}>
                {r === 11 && (
                  <>
                    <p className="pl-[3px] font-['Noto_Sans_CJK_SC',sans-serif] text-[14px] leading-[16px] font-bold whitespace-nowrap">
                      {cellNote.map((line) => (
                        <span key={line} className="block">
                          <Mixed text={line} latin="font-['Liberation_Mono',monospace] text-[13px] leading-[10px]" />
                        </span>
                      ))}
                    </p>
                    <Selection />
                  </>
                )}
              </td>
              <td className={`${cell} p-0 pl-[2px]`}>
                {links[r] && (
                  <a href={`#fig-${r}`} className="text-[14px] whitespace-nowrap text-[#800080] underline underline-offset-2">
                    <Mixed text={links[r]} latin="font-['Liberation_Mono',monospace] text-[14px]" />
                  </a>
                )}
              </td>
              {r === 8 && <Side />}
              <td className={numCell}>{r - 7}</td>
              <td className="border-b border-black" />
            </tr>
          ))}
        </tbody>
      </table>
    </div>
  );
}

function ExcelWindow() {
  return (
    <section
      aria-label="Microsoft Excel"
      className={`absolute top-[51px] right-0 bottom-0 left-[821px] flex flex-col overflow-hidden rounded-tl-[6px] bg-[#c5daf6] ${CJK}`}
    >
      <ExcelTitle />
      <ExcelTabs />
      <div className="flex h-[106px] shrink-0 gap-[3px] overflow-hidden rounded-bl-[3px] border-b-2 border-[#a4e3f0] bg-[#d6e4f4] pt-[2px] pl-[3px]">
        <ClipboardGroup />
        <FontGroup />
        <AlignGroup />
        <NumberGroup />
        <StyleGroup />
        <CellsGroup />
        <EditGroup />
      </div>
      <SecurityBar />
      <FormulaBar />
      <div className="h-[4px] shrink-0 border-b border-[#6f92c1] bg-[#dce9f9]" />
      <Sheet />
      <div className="absolute top-[5px] left-[2px]">
        <button type="button" aria-label="Office 按钮" className="block">
          <OfficeOrb />
        </button>
      </div>
    </section>
  );
}

export default function App() {
  return (
    <div className="flex h-screen flex-col overflow-hidden bg-black">
      <TitleBar />
      <GenesisHeader />
      <main className="relative flex min-h-0 flex-1">
        <LayerPanel />
        <div className="min-w-0 flex-1 overflow-hidden bg-black">
          <BoardCanvas />
        </div>
        <ToolColumn />
        <ExcelWindow />
      </main>
    </div>
  );
}
